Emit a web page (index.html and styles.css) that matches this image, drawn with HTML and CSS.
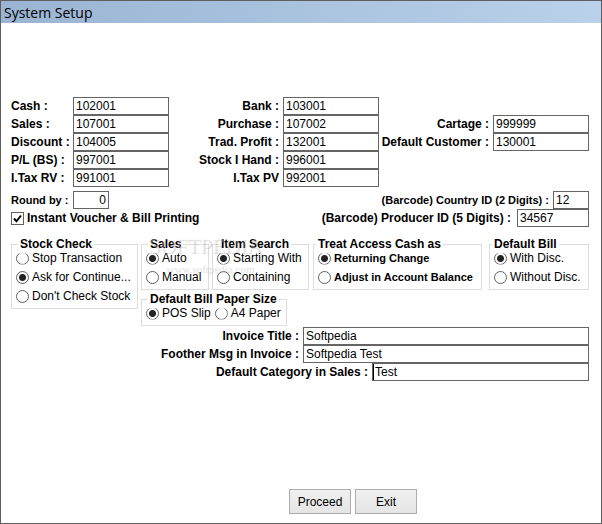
FILE: index.html
```html
<!DOCTYPE html>
<html lang="en">
  <head>
    <meta charset="UTF-8" />
    <meta name="viewport" content="width=device-width, initial-scale=1.0" />
    <title>System Setup</title>
    <link rel="stylesheet" href="styles.css">
  </head>
  <body>
    <header class="title-bar">
      <h1 class="title">System Setup</h1>
    </header>

    <form class="setup-form">
      <div class="accounts">
        <label class="first" for="cash">Cash :</label>
        <input type="text" id="cash" value="102001" />
        <label for="bank">Bank :</label>
        <input type="text" id="bank" value="103001" />

        <label class="first" for="sales">Sales :</label>
        <input type="text" id="sales" value="107001" />
        <label for="purchase">Purchase :</label>
        <input type="text" id="purchase" value="107002" />
        <label for="cartage">Cartage :</label>
        <input type="text" id="cartage" value="999999" />

        <label class="first" for="discount">Discount :</label>
        <input type="text" id="discount" value="104005" />
        <label for="profit">Trad. Profit :</label>
        <input type="text" id="profit" value="132001" />
        <label for="customer">Default Customer :</label>
        <input type="text" id="customer" value="130001" />

        <label class="first" for="pl">P/L (BS) :</label>
        <input type="text" id="pl" value="997001" />
        <label for="stock">Stock I Hand :</label>
        <input type="text" id="stock" value="996001" />

        <label class="first" for="taxRv">I.Tax RV :</label>
        <input type="text" id="taxRv" value="991001" />
        <label for="taxPv">I.Tax PV</label>
        <input type="text" id="taxPv" value="992001" />
      </div>

      <div class="options">
        <div class="row">
          <label class="round-label small" for="round">Round by :</label>
          <input class="short number" type="text" id="round" value="0" />
          <label class="push small" for="country">(Barcode) Country ID (2 Digits) :</label>
          <input class="short" type="text" id="country" value="12" />
        </div>
        <div class="row">
          <input class="check" type="checkbox" id="instant" checked />
          <label for="instant">Instant Voucher &amp; Bill Printing</label>
          <label class="push wide-gap" for="producer">(Barcode) Producer ID (5 Digits) :</label>
          <input class="medium" type="text" id="producer" value="34567" />
        </div>
      </div>

      <div class="groups">
        <fieldset class="group stock-check">
          <legend>Stock Check</legend>
          <div class="choices">
            <label><input type="radio" name="stockCheck" />Stop Transaction</label>
            <label><input type="radio" name="stockCheck" checked />Ask for Continue...</label>
            <label><input type="radio" name="stockCheck" />Don't Check Stock</label>
          </div>
        </fieldset>
        <fieldset class="group">
          <legend>Sales</legend>
          <div class="choices">
            <label><input type="radio" name="salesMode" checked />Auto</label>
            <label><input type="radio" name="salesMode" />Manual</label>
          </div>
        </fieldset>
        <fieldset class="group">
          <legend>Item Search</legend>
          <div class="choices">
            <label><input type="radio" name="search" checked />Starting With</label>
            <label><input type="radio" name="search" />Containing</label>
          </div>
        </fieldset>
        <fieldset class="group narrow-legend">
          <legend>Treat Access Cash as</legend>
          <div class="choices strong">
            <label><input type="radio" name="cashMode" checked />Returning Change</label>
            <label><input type="radio" name="cashMode" />Adjust in Account Balance</label>
          </div>
        </fieldset>
        <fieldset class="group narrow-legend">
          <legend>Default Bill</legend>
          <div class="choices">
            <label><input type="radio" name="bill" checked />With Disc.</label>
            <label><input type="radio" name="bill" />Without Disc.</label>
          </div>
        </fieldset>
        <fieldset class="group paper-size">
          <legend>Default Bill Paper Size</legend>
          <div class="choices inline">
            <label><input type="radio" name="paper" checked />POS Slip</label>
            <label><input type="radio" name="paper" />A4 Paper</label>
          </div>
        </fieldset>
        <div class="watermark" aria-hidden="true">
          <span class="watermark-name">SOFTPEDIA<sup>™</sup></span>
          <span class="watermark-url">www.softpedia.com</span>
        </div>
      </div>

      <div class="invoice">
        <div class="row">
          <label class="push" for="invoiceTitle">Invoice Title :</label>
          <input class="long" type="text" id="invoiceTitle" value="Softpedia" />
        </div>
        <div class="row">
          <label class="push" for="footer">Foother Msg in Invoice :</label>
          <input class="long" type="text" id="footer" value="Softpedia Test" />
        </div>
        <div class="row">
          <label class="push" for="category">Default Category in Sales :</label>
          <input class="category current" type="text" id="category" value="Test" />
        </div>
      </div>

      <div class="actions">
        <button type="button">Proceed</button>
        <button type="button">Exit</button>
      </div>
    </form>
  </body>
</html>
```
FILE: styles.css
```css
* {
  box-sizing: border-box;
}

body {
  margin: 0;
  min-height: 100vh;
  border: 1px solid #5f5f5f;
  background: white;
  color: black;
  font-family: "Liberation Sans", Arial, sans-serif;
  font-size: 12px;
  line-height: 18px;
}

.title-bar {
  height: 22px;
  padding: 0 3px;
  background: linear-gradient(to right, #9ab4d3, #b9d1ea);
}

.title {
  margin: 0;
  font-family: "Open Sans", "Noto Sans", sans-serif;
  font-size: 14px;
  font-weight: normal;
  line-height: 23px;
}

.setup-form {
  padding: 74px 12px 8px 10px;
}

label {
  font-weight: bold;
  white-space: nowrap;
}

input,
button {
  margin: 0;
  font-family: inherit;
  font-size: 12px;
  color: black;
}

input[type="text"] {
  width: 100%;
  min-width: 0;
  height: 18px;
  padding: 0 2px;
  border: 1px solid #656565;
  border-radius: 0;
  background: white;
  outline: none;
}

/* account codes */
.accounts {
  display: grid;
  grid-template-columns: 62px 96px 1fr 96px 1fr 96px;
  grid-auto-rows: 18px;
}

.accounts label {
  padding-right: 4px;
  text-align: right;
}

.accounts .first {
  grid-column: 1;
  padding-right: 0;
  text-align: left;
}

.options {
  margin-top: 4px;
}

.row {
  display: flex;
  align-items: center;
}

.small {
  font-size: 11px;
}

.round-label {
  width: 62px;
}

.push {
  margin-left: auto;
  padding-right: 4px;
}

.wide-gap {
  padding-right: 6px;
}

.row .short {
  width: 36px;
}

.row .medium {
  width: 72px;
}

.row .long {
  width: 286px;
}

.row .category {
  width: 217px;
}

.row .current {
  box-shadow: inset 1px 0 0 black;
}

.row .number {
  text-align: right;
}

.check {
  appearance: none;
  width: 13px;
  height: 13px;
  margin-right: 3px;
  border: 1px solid #606060;
  background: white;
}

.check:checked {
  background: url("data:image/svg+xml,%3Csvg xmlns='http://www.w3.org/2000/svg' viewBox='0 0 11 11'%3E%3Cpath d='M2 5.5l2.5 2.8L9 2.5' fill='none' stroke='black' stroke-width='2'/%3E%3C/svg%3E");
}

/* radio groups */
.groups {
  position: relative;
  display: grid;
  grid-template-columns: 130fr 71fr 101fr 176fr 100fr;
  row-gap: 3px;
  align-items: start;
  margin-top: 11px;
}

.group {
  min-width: 0;
  margin: 0 3px 0 0;
  padding: 0 0 4px 4px;
  border: 1px solid #dcdcdc;
}

.group:nth-of-type(3) {
  margin-right: 4px;
}

.group:nth-of-type(4) {
  margin-right: 7px;
}

.group:nth-of-type(5) {
  margin-right: 0;
}

.group legend {
  margin-left: 2px;
  padding: 0 2px;
  font-weight: bold;
  line-height: 12px;
  white-space: nowrap;
}

.narrow-legend legend {
  margin-left: -2px;
}

.stock-check {
  grid-row: 1 / 3;
}

.group.paper-size {
  grid-column: 2 / 4;
  width: 146px;
}

.choices {
  display: flex;
  flex-direction: column;
  gap: 3px;
}

.choices label {
  display: flex;
  align-items: center;
  gap: 3px;
  height: 16px;
  font-weight: normal;
}

.strong label {
  font-size: 11px;
  font-weight: bold;
}

.inline {
  flex-direction: row;
  gap: 4px;
}

.choices input {
  appearance: none;
  flex: none;
  width: 13px;
  height: 13px;
  border: 1px solid #606060;
  border-radius: 50%;
  background: white;
}

.choices input:checked {
  background: radial-gradient(circle, #222 3px, white 4px);
}

.choices label:first-child input,
.inline input {
  clip-path: inset(2px 0 0 0);
}

.watermark {
  position: absolute;
  top: -8px;
  left: 138px;
  display: flex;
  flex-direction: column;
  align-items: center;
  color: rgba(255, 255, 255, 0.3);
  font-family: "Liberation Serif", serif;
  text-shadow: 1px 1px 1px rgba(0, 0, 0, 0.15);
  pointer-events: none;
}

.watermark-name {
  font-size: 21px;
  line-height: 32px;
}

.watermark-name sup {
  font-size: 8px;
  line-height: 8px;
}

.watermark-url {
  font-size: 11px;
  line-height: 12px;
}

.invoice {
  margin-top: 1px;
}

.actions {
  display: flex;
  gap: 4px;
  margin-top: 108px;
  padding-left: 278px;
}

.actions button {
  width: 62px;
  height: 25px;
  padding: 0;
  border: 1px solid #acacac;
  background: linear-gradient(#f0f0f0, #e5e5e5);
}
```
